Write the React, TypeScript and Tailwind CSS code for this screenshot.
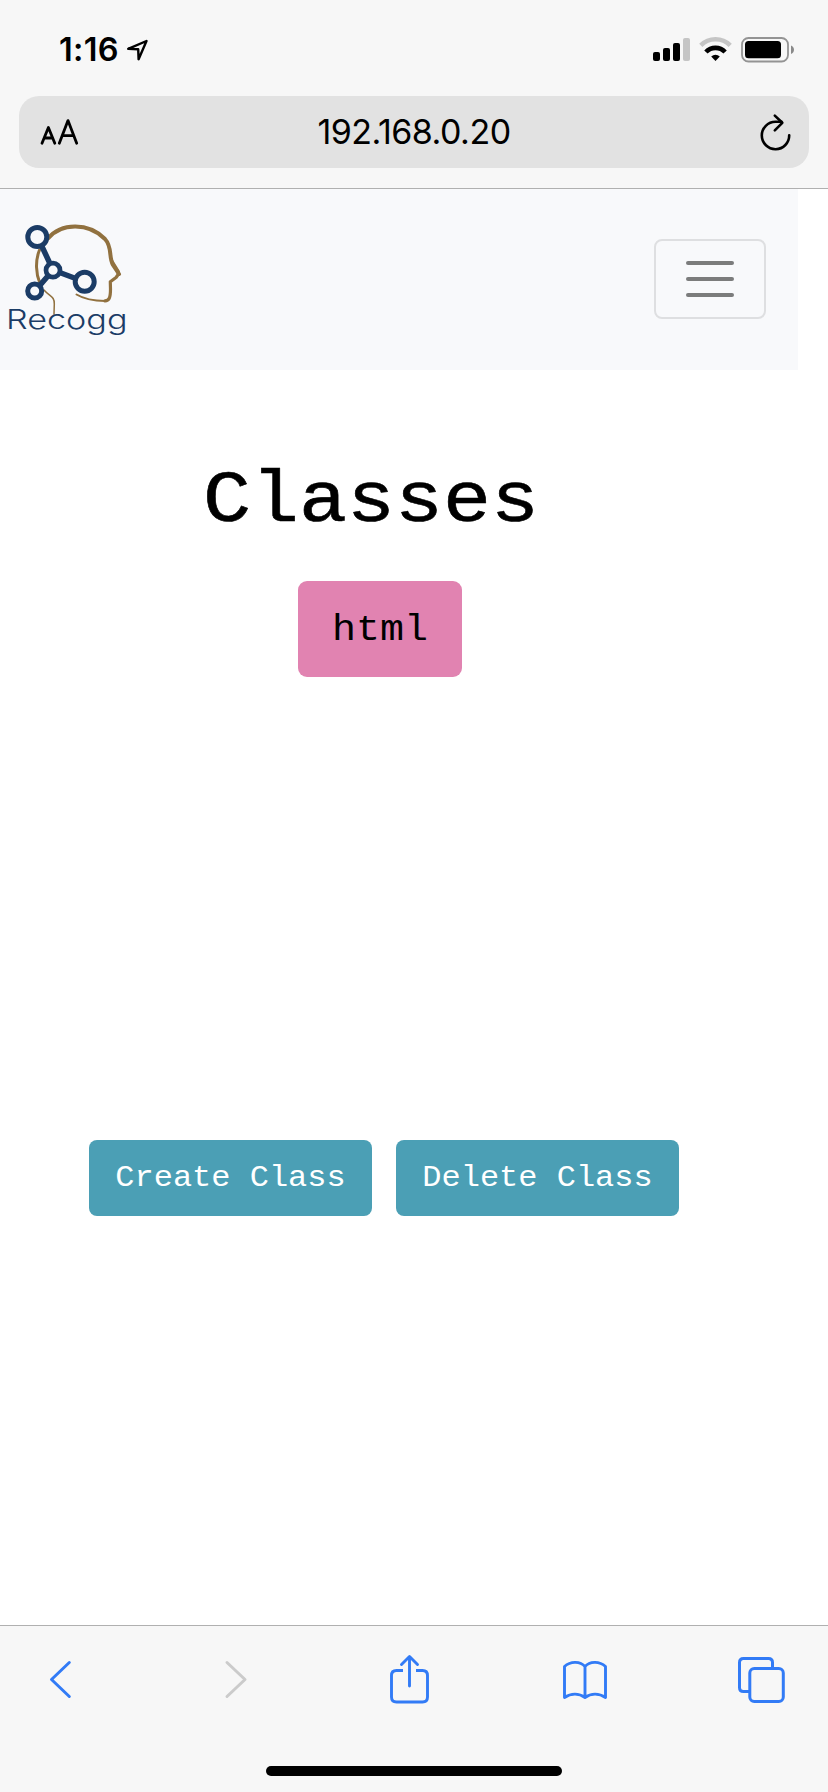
import type { ReactNode } from "react";

const mono = "font-['Liberation_Mono',monospace]";

function StatusBar() {
  return (
    <div className="flex h-24 items-start justify-between pl-[59px] pr-[33px]">
      <div className="flex items-start">
        <span className="mt-[29px] w-[61px] text-[32.5px] leading-[42px] font-semibold tracking-[0.3px] whitespace-nowrap">1:16</span>
        <svg className="mt-[38px] ml-[5px]" width="26" height="24" viewBox="0 0 26 24" fill="none" stroke="#000" strokeWidth="2.4" strokeLinejoin="round">
          <path d="M3.200 10.800 21.500 3 13.600 21.200 13.200 11.200Z" />
        </svg>
      </div>
      <div className="flex items-start pt-[37px]">
        <svg width="38" height="25" viewBox="0 0 38 25">
          <rect x="0" y="15" width="7" height="9" rx="2" />
          <rect x="10" y="11" width="7" height="13" rx="2" />
          <rect x="20" y="6" width="7" height="18" rx="2" />
          <rect x="30" y="1" width="7" height="23" rx="2" fill="#c5c5c5" />
        </svg>
        <svg className="ml-[8px]" width="33" height="25" viewBox="0 0 33 25" fill="none">
          <path d="M1.800 8.400a20.800 20.800 0 0 1 29.400 0" stroke="#c5c5c5" strokeWidth="4.6" />
          <path d="M6.900 15a13.200 13.200 0 0 1 19.200 0" stroke="#000" strokeWidth="4.6" />
          <path d="M16.500 24l-4.300-4.500a6.500 6.500 0 0 1 8.600 0Z" fill="#000" />
        </svg>
        <svg className="ml-[9px]" width="54" height="26" viewBox="0 0 54 26">
          <rect x="1" y="1" width="46" height="23.5" rx="6.5" fill="none" stroke="#949494" strokeWidth="1.8" />
          <rect x="4" y="4" width="36" height="17.3" rx="3.5" />
          <path d="M50 8.500c4 1.500 4 7 0 8.500Z" fill="#8a8a8a" />
        </svg>
      </div>
    </div>
  );
}

function AddressBar() {
  return (
    <div className="mx-[19px] flex h-[72px] items-center justify-between rounded-[20px] bg-[#e2e2e2] px-[17px]">
      <div className="flex w-[46px] justify-end">
        <svg width="42" height="30" viewBox="0 0 42 30" fill="none" stroke="#000" strokeWidth="2.8" strokeLinecap="round" strokeLinejoin="round">
          <path d="M2 26.300 8.400 10.500 14.800 26.300M4.400 21h8" />
          <path d="M19.300 26.300 28 3.600l8.700 22.700M22.200 18.600h11.600" />
        </svg>
      </div>
      <span className="text-[34px] leading-10 tracking-[-0.5px] whitespace-nowrap">192.168.0.20</span>
      <div className="flex w-[46px] justify-end">
        <svg width="34" height="40" viewBox="0 0 34 40" fill="none" stroke="#000" strokeWidth="2.6" strokeLinecap="round" strokeLinejoin="round">
          <path d="M31.200 23.200A13.700 13.700 0 1 1 17.500 9.800h6" />
          <path d="m16.800 3.600 7.500 7.200-7.500 7.600" />
        </svg>
      </div>
    </div>
  );
}

function Logo() {
  return (
    <svg width="130" height="181" viewBox="0 0 130 181">
      <g fill="none" stroke="#91713f" strokeLinecap="round" strokeLinejoin="round">
        <path d="M48 49.500C61 34 88 33 105 50C112.500 58 108.500 68 113 76L119 85" strokeWidth="4" />
        <path d="M111.500 71.500 118.300 82.700C119 85.500 118 86.500 116 88.500L110.300 92.800 110.500 100C110.500 109 109 111.800 105 111.900" strokeWidth="3.200" />
        <path d="M106 111.900C94 112 84 110 76.500 105.500" strokeWidth="2" />
        <path d="M39.500 61C35 72 36 85 39.800 94" strokeWidth="3" />
        <path d="M44 101C50 108 54.500 107 54.300 115L54 125" strokeWidth="1.500" />
      </g>
      <g fill="#f8f9fb" stroke="#1b3c66">
        <path d="M37.500 48 53 81 35 102M53 81 85 93" fill="none" strokeWidth="5.500" />
        <circle cx="37.300" cy="48" r="9.500" strokeWidth="5" />
        <circle cx="53" cy="81.200" r="7" strokeWidth="4.700" />
        <circle cx="84.700" cy="92.800" r="9.500" strokeWidth="5" />
        <circle cx="34.700" cy="102" r="7" strokeWidth="5" />
      </g>
      <text x="6" y="140" textLength="121.500" lengthAdjust="spacingAndGlyphs" fill="#1b3c66" className="font-['Inter',sans-serif] text-[27px] font-light">
        Recogg
      </text>
    </svg>
  );
}

function Navbar() {
  return (
    <nav className="flex h-[181px] w-[798px] items-center justify-between bg-[#f8f9fb] pr-8">
      <Logo />
      <button className="mt-[-2px] flex h-20 w-28 flex-col items-center justify-center gap-3 rounded-[8px] border-2 border-[#dedfe1]" aria-label="Menu">
        <span className="h-1 w-12 rounded-full bg-[#7b7c7c]" />
        <span className="h-1 w-12 rounded-full bg-[#7b7c7c]" />
        <span className="h-1 w-12 rounded-full bg-[#7b7c7c]" />
      </button>
    </nav>
  );
}

function ActionButton({ children }: { children: ReactNode }) {
  return (
    <button className={`${mono} h-[76px] w-[283px] rounded-[8px] bg-[#4b9fb5] text-[32px] leading-[48px] whitespace-nowrap text-white`}>
      <span className="inline-block origin-[50%_68%] scale-y-90">{children}</span>
    </button>
  );
}

function Toolbar() {
  return (
    <footer className="flex h-[167px] flex-col items-center justify-between border-t border-[#b0b0b0] bg-[#f7f7f7] pb-4">
      <div className="flex h-[108px] w-full items-center pl-[47px]">
        <svg width="28" height="48" viewBox="0 0 28 48" fill="none" stroke="#327bf6" strokeWidth="3" strokeLinecap="round" strokeLinejoin="round">
          <path d="M22.300 6.500 4.500 23.500l17.800 17" />
        </svg>
        <svg className="ml-[147px]" width="28" height="48" viewBox="0 0 28 48" fill="none" stroke="#cbcbcb" strokeWidth="3" strokeLinecap="round" strokeLinejoin="round">
          <path d="m5 6.500 18 17-18 17" />
        </svg>
        <svg className="mb-[3px] ml-[139px]" width="42" height="50" viewBox="0 0 42 50" fill="none" stroke="#327bf6" strokeWidth="2.900" strokeLinejoin="round">
          <path d="M14 16.500H7.500q-5 0-5 5v21.500q0 5 5 5h26q5 0 5-5V21.500q0-5-5-5H27" />
          <path d="M20.500 32V3.200M12.500 10.500l8-8 8 8" strokeLinecap="round" />
        </svg>
        <svg className="ml-[130px]" width="48" height="42" viewBox="0 0 48 42" fill="none" stroke="#327bf6" strokeWidth="2.900" strokeLinejoin="round" strokeLinecap="round">
          <path d="M24 38.500V7.500C19.500 2.500 10 1.500 3.500 7.500v31C10 34 18 34 24 38.500 30 34 38 34 44.500 38.500v-31C38 1.500 28.500 2.500 24 7.500" />
        </svg>
        <svg className="ml-[127px]" width="50" height="50" viewBox="0 0 50 50" fill="none" stroke="#327bf6" strokeWidth="3">
          <path d="M13 36.500H7.500q-4 0-4-4v-25q0-4 4-4h25q4 0 4 4V13" />
          <rect x="13.800" y="13.500" width="33.500" height="33" rx="4.500" />
        </svg>
      </div>
      <div className="h-[10px] w-[296px] rounded-full bg-black" />
    </footer>
  );
}

export default function App() {
  return (
    <div className="flex h-[1792px] w-[828px] flex-col overflow-hidden bg-white font-['Inter',sans-serif] text-black">
      <header className="h-[189px] border-b border-[#b0b0b0] bg-[#f7f7f7]">
        <StatusBar />
        <AddressBar />
      </header>
      <Navbar />
      <main className="flex flex-1 flex-col">
        <h1 className={`${mono} mt-[82px] ml-[203px] origin-[50%_72%] scale-y-90 text-[80px] leading-[96px] [-webkit-text-stroke:0.7px_black]`}>
          Classes
        </h1>
        <button className={`${mono} mt-[33px] ml-[298px] h-24 w-[164px] rounded-[9px] bg-[#e183b1] pt-[2px] text-[40px] leading-[60px]`}>
          <span className="inline-block origin-[50%_68%] scale-y-90">html</span>
        </button>
        <div className="mt-[463px] ml-[89px] flex gap-6">
          <ActionButton>Create Class</ActionButton>
          <ActionButton>Delete Class</ActionButton>
        </div>
      </main>
      <Toolbar />
    </div>
  );
}
